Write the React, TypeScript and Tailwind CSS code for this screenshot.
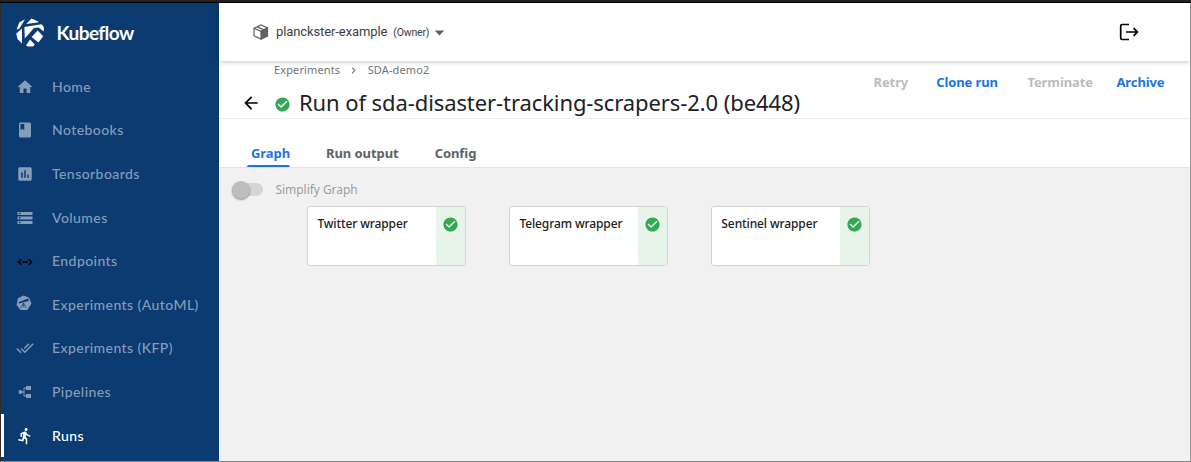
import type { ReactNode } from 'react';
import {
  MdHome, MdBook, MdAssessment, MdStorage, MdDoneAll,
  MdDirectionsRun, MdArrowBack, MdCheckCircle, MdChevronRight, MdArrowDropDown,
} from 'react-icons/md';

function KubeflowLogo() {
  return (
    <svg viewBox="0 0 28 29" className="h-[29px] w-7" fill="white">
      <path d="M9 1.2 3.2 4.6 0.6 11.8 3.4 10.6Z" />
      <path d="M10.2 5.9 15.5 0.4 22.4 3.4 21.8 4.6Z" />
      <path d="M8.4 9 25.6 6.2 27.8 9 27.8 13.4 22.6 9.6 18 9.9 8.8 20.6Z" />
      <path d="M0.3 15.4 6 10.6 6 25.6 1.5 21Z" />
      <path d="M21.6 12.6 27.2 18.2 22.4 24.6 15.6 19Z" />
      <path d="M10 27.4 14 21.4 18.8 26.6 17.2 28.4 12 28.6Z" />
    </svg>
  );
}

function AutoMLIcon() {
  return (
    <svg viewBox="0 0 16 16" className="mr-[3px] mb-[3px] h-4 w-4" fill="currentColor">
      <path d="M7.6 0.4 13.2 2.8 15.4 8.6 11.4 15H4.6L0.6 10 1.9 3.3Z" />
      <path d="M2.4 7.2 12.2 3.6 13 5.8 3 8.4Z" fill="#0b3b70" />
      <path d="M7.6 8 5 13M7.6 8v4M7.6 8 10.2 13" stroke="#0b3b70" strokeWidth=".7" />
    </svg>
  );
}

function EndpointsIcon() {
  return (
    <svg viewBox="0 0 16 8" className="mt-px h-2 w-4" fill="none" stroke="black" strokeWidth="1.5">
      <path d="M4.2 1.2 1.4 4l2.8 2.8M11.8 1.2 14.6 4l-2.8 2.8M5 4h6" />
    </svg>
  );
}

function PipelinesIcon() {
  return (
    <svg viewBox="0 0 13 14" className="mr-[2px] h-3.5 w-[13px]" fill="currentColor">
      <circle cx="2.4" cy="7" r="2" />
      <path d="M8 1h5v4H8zM8 9h5v4H8z" />
      <path d="M2 7h4M8.5 3H6v8h2.5" fill="none" stroke="currentColor" />
    </svg>
  );
}

function NamespaceIcon() {
  return (
    <svg viewBox="0 0 16 16" className="ml-px h-4 w-4" fill="none" stroke="#5f6368" strokeWidth="1.2">
      <path d="M1 4.2 8 1l6.5 3v7.8L8 15l-7-3.2Z" />
      <path d="M1 4.4 8 7.4 14.5 4M4.3 2.9l6.8 3" />
      <path d="M8 7.4 14.5 4v7.8L8 15Z" fill="#5f6368" />
    </svg>
  );
}

function LogoutIcon() {
  return (
    <svg viewBox="0 0 20 18" className="h-[18px] w-5" fill="none" stroke="black" strokeWidth="1.7">
      <path d="M10 1.5H3.2q-1.5 0-1.5 1.5v12q0 1.5 1.5 1.5H10" />
      <path d="M7 9H18.2M14.6 5.2 18.4 9l-3.8 3.8" />
    </svg>
  );
}

function NavItem({ icon, label, active = false }: { icon: ReactNode; label: string; active?: boolean }) {
  return (
    <a className={`flex h-[43.6px] shrink-0 items-center border-l-[3px] text-[14px] font-medium ${active ? 'border-white text-white' : 'border-transparent text-[#859db8]'}`}>
      <span className="flex w-[42px] justify-center">{icon}</span>
      <span className="ml-1.5 whitespace-nowrap pb-px tracking-[0.43px]">{label}</span>
    </a>
  );
}

function GraphNode({ label }: { label: string }) {
  return (
    <div className="flex h-[60px] w-[158.6px] overflow-hidden rounded-[3px] border border-[#d2d3d4] bg-white">
      <span className="flex-1 whitespace-nowrap pl-[9.4px] pt-[9px] text-[12px] font-medium leading-4 tracking-[-0.11px] text-[#202124]">{label}</span>
      <span className="flex w-[29px] justify-center bg-[#e6f4ea] pt-[8.5px]">
        <MdCheckCircle className="h-[17px] w-[17px] text-[#34a853]" />
      </span>
    </div>
  );
}

export default function App() {
  return (
    <div className="flex h-[462px] w-[1191px] flex-col overflow-hidden bg-[#f1f1f1] font-['Noto_Sans',sans-serif]">
      <div className="h-[3px] shrink-0 border-b border-black bg-[#222127]" />
      <div className="flex min-h-0 flex-1 border-b border-l border-b-[#858585] border-l-[#2d2d2d]">
        <nav className="flex w-[218px] shrink-0 flex-col overflow-hidden bg-[#0b3b70] font-['Lato','Open_Sans',sans-serif]">
          <div className="flex h-[62px] shrink-0 items-center pb-[3px] pl-[15px]">
            <KubeflowLogo />
            <span className="ml-[12.5px] pt-[2px] text-[19px] font-bold tracking-[-0.55px] text-white">Kubeflow</span>
          </div>
          <NavItem icon={<MdHome size={18} />} label="Home" />
          <NavItem icon={<MdBook size={18} />} label="Notebooks" />
          <NavItem icon={<MdAssessment size={18} />} label="Tensorboards" />
          <NavItem icon={<MdStorage size={18} />} label="Volumes" />
          <NavItem icon={<EndpointsIcon />} label="Endpoints" />
          <NavItem icon={<AutoMLIcon />} label="Experiments (AutoML)" />
          <NavItem icon={<MdDoneAll size={18} />} label="Experiments (KFP)" />
          <NavItem icon={<PipelinesIcon />} label="Pipelines" />
          <NavItem icon={<MdDirectionsRun size={18} />} label="Runs" active />
        </nav>
        <main className="flex min-w-0 flex-1 flex-col border-r border-r-[#999]">
          <header className="z-10 flex h-[58px] shrink-0 items-center justify-between bg-white pl-[33px] pr-[51px] shadow-[0_1px_5px_rgba(0,0,0,0.22)]">
            <div className="flex items-center font-['Roboto',sans-serif] text-[#3c4043]">
              <NamespaceIcon />
              <span className="ml-[7px] text-[13px] tracking-[-0.1px]">planckster-example</span>
              <span className="ml-1.5 pt-px text-[10.5px] tracking-[-0.2px]">(Owner)</span>
              <MdArrowDropDown size={23} className="-ml-px text-[#5f6368]" />
            </div>
            <LogoutIcon />
          </header>
          <section className="flex h-[58px] shrink-0 justify-between border-b border-[#eceded] bg-white pl-[22px] pr-[25.5px]">
            <div>
              <div className="flex h-[18px] items-center pl-[33px] text-[11px] tracking-[0.12px] text-[#70757a]">
                <span>Experiments</span>
                <MdChevronRight size={13} className="mx-[7px]" />
                <span className="ml-[0.5px]">SDA-demo2</span>
              </div>
              <div className="flex h-[39px] items-center pt-[8px]">
                <MdArrowBack size={20} className="text-black" />
                <MdCheckCircle size={17} className="ml-[12.5px] mt-[3px] text-[#34a853]" />
                <h1 className="ml-[8.5px] whitespace-nowrap text-[22px] tracking-[-0.09px] text-[#202124]">Run of sda-disaster-tracking-scrapers-2.0 (be448)</h1>
              </div>
            </div>
            <div className="flex h-[44px] items-center text-[13px] font-bold tracking-[-0.1px] text-[#1a73e8]">
              <span className="text-[#bdbdbd]">Retry</span>
              <span className="ml-7">Clone run</span>
              <span className="ml-[29.5px] text-[#bdbdbd]">Terminate</span>
              <span className="ml-[23.5px]">Archive</span>
            </div>
          </section>
          <div className="flex h-[49px] shrink-0 items-end border-b border-[#e3e3e3] bg-white pl-7 text-[13px] font-bold leading-[18px] tracking-[-0.07px] text-[#5f6368]">
            <span className="flex h-[23px] w-[43px] flex-col pl-1 text-[#1a73e8]">
              Graph
              <span className="-ml-1 mt-[3px] h-[2px] shrink-0 rounded-t-[2px] bg-[#1a73e8]" />
            </span>
            <span className="mb-[5px] ml-9">Run output</span>
            <span className="mb-[5px] ml-9">Config</span>
          </div>
          <div className="flex-1 bg-[#f1f1f1]">
            <div className="flex h-[38px] items-center pl-[13px] pt-1.5 text-[12px] tracking-[-0.05px] text-[#9e9e9e]">
              <span className="mb-px flex h-[13px] w-[31px] items-center rounded-full bg-[#d5d5d5]">
                <span className="h-[18px] w-[18px] shrink-0 rounded-full bg-[#bdbdbd] shadow-[0_1px_2px_rgba(0,0,0,0.4)]" />
              </span>
              <span className="ml-[12.5px]">Simplify Graph</span>
            </div>
            <div className="flex gap-[43.4px] pl-[88px]">
              <GraphNode label="Twitter wrapper" />
              <GraphNode label="Telegram wrapper" />
              <GraphNode label="Sentinel wrapper" />
            </div>
          </div>
        </main>
      </div>
    </div>
  );
}
